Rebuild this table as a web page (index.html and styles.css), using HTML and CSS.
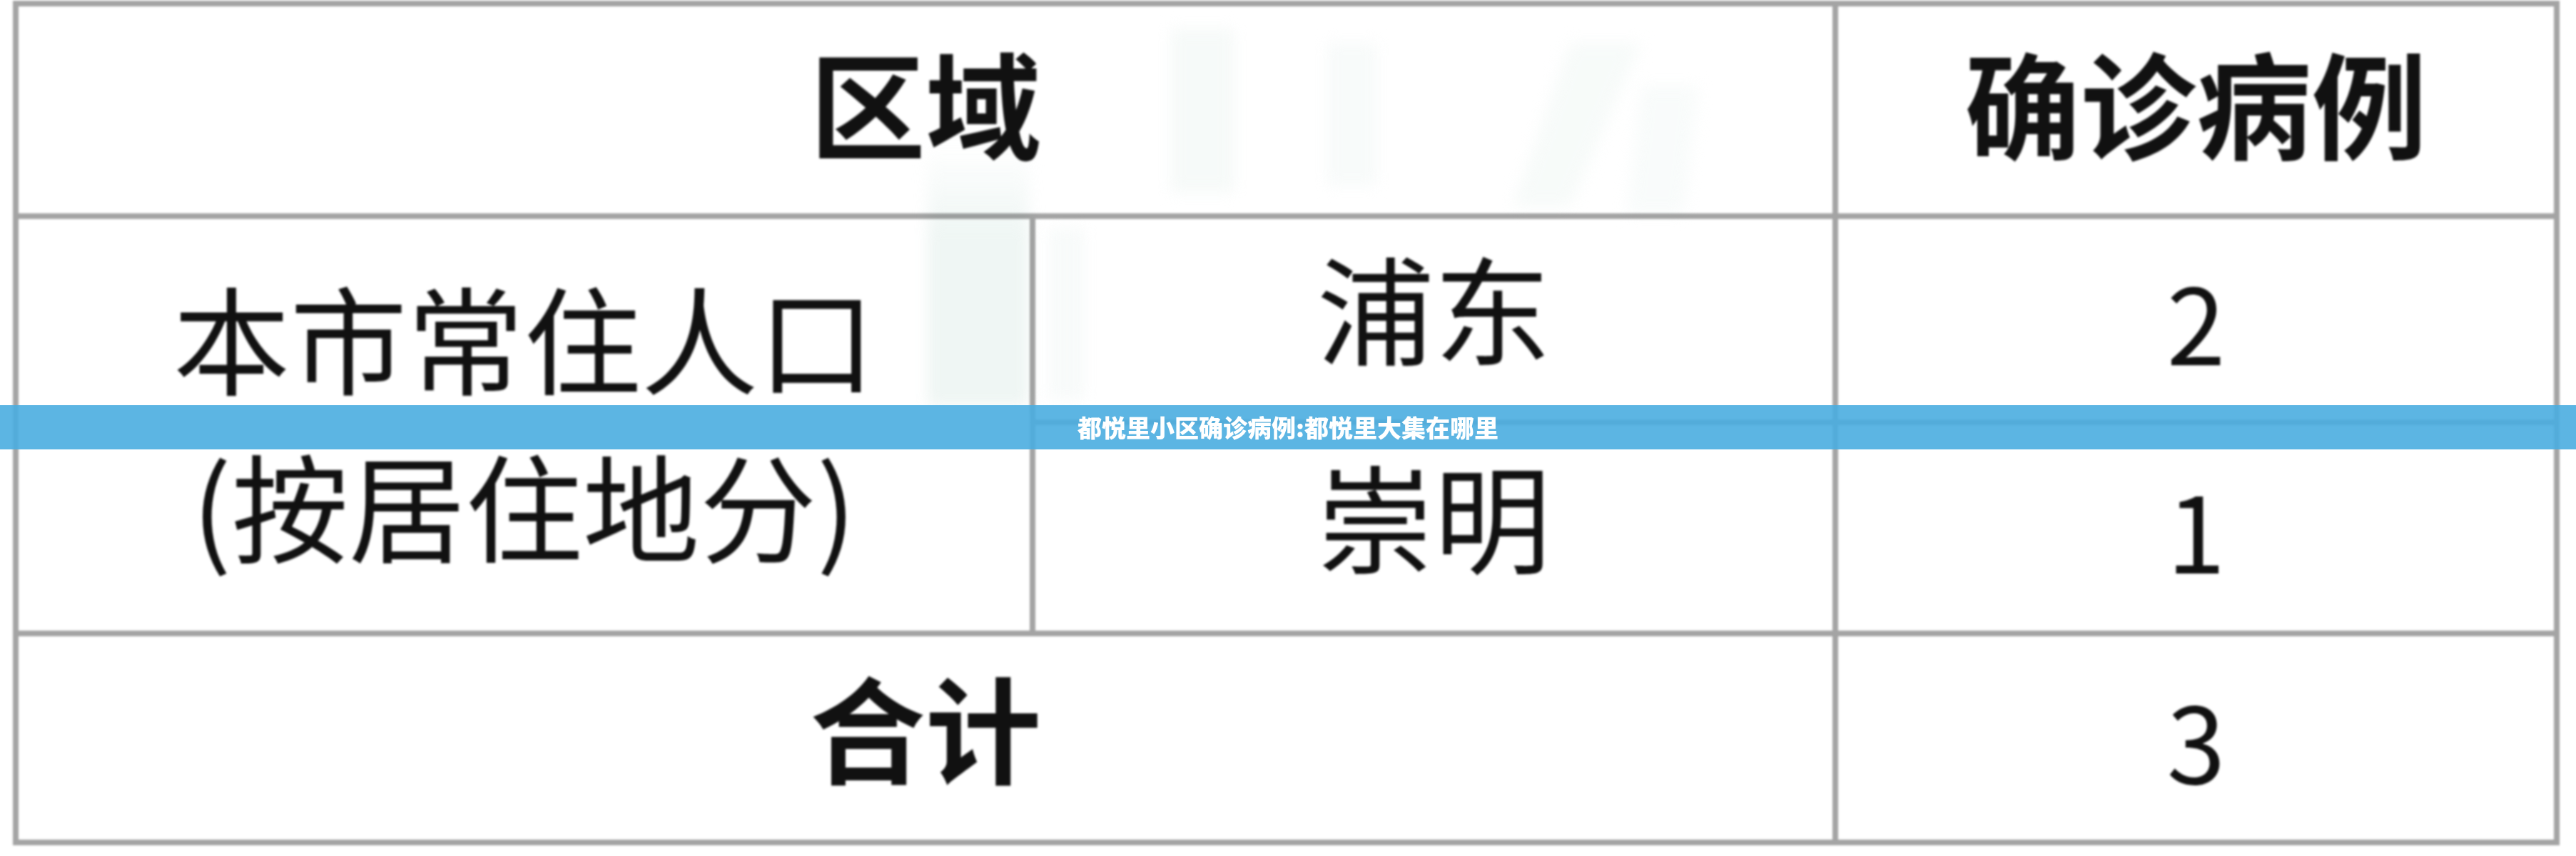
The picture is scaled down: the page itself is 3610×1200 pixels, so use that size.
FILE: index.html
```html
<!DOCTYPE html>
<html lang="zh-CN">
<head>
<meta charset="utf-8">
<title>都悦里小区确诊病例:都悦里大集在哪里</title>
<link rel="stylesheet" href="styles.css">
</head>
<body>
<main class="sheet">
  <div class="grid">
    <div class="cell head span2">区域</div>
    <div class="cell head">确诊病例</div>
    <div class="cell group">本市常住人口<br>(按居住地分)</div>
    <div class="cell area">浦东</div>
    <div class="cell num">2</div>
    <div class="cell area">崇明</div>
    <div class="cell num">1</div>
    <div class="cell head span2 total">合计</div>
    <div class="cell num">3</div>
  </div>
  <svg class="watermark" viewBox="0 0 3610 1200" aria-hidden="true">
    <defs>
      <linearGradient id="wm" x1="0" y1="0" x2="0" y2="1">
        <stop offset="0" stop-color="#e8f2ef" stop-opacity="0"/>
        <stop offset="0.35" stop-color="#e8f2ef" stop-opacity="1"/>
        <stop offset="1" stop-color="#e8f2ef" stop-opacity="1"/>
      </linearGradient>
    </defs>
    <rect x="1300" y="200" width="142" height="370" fill="url(#wm)"/>
    <rect x="1640" y="40" width="90" height="230" fill="#f3f8f6"/>
    <rect x="1860" y="60" width="70" height="200" fill="#f5f9f8"/>
    <path d="M2200 60 L2300 60 L2200 290 L2120 290 Z" fill="#f4f9f7"/>
    <path d="M2300 120 L2380 120 L2360 300 L2280 300 Z" fill="#f6faf9"/>
    <rect x="1470" y="320" width="50" height="240" fill="#f5f9f8"/>
  </svg>
  <div class="banner">都悦里小区确诊病例:都悦里大集在哪里</div>
</main>
</body>
</html>
```
FILE: styles.css
```css
html, body {
  margin: 0;
  padding: 0;
  background: #ffffff;
}

.sheet {
  position: relative;
  width: 3610px;
  height: 1200px;
  overflow: hidden;
  background: #ffffff;
  font-family: "Noto Sans CJK SC", "Noto Sans", sans-serif;
  color: #111111;
}

.grid {
  display: grid;
  grid-template-columns: 1417px 1117px 1003px;
  grid-template-rows: 290px 281px 288px 285px;
  gap: 8px;
  padding: 8px;
  margin: 1px 0 0 18px;
  width: max-content;
  background: #a4a4a4;
  filter: blur(1.4px);
}

.cell {
  background: #ffffff;
  display: flex;
  align-items: center;
  justify-content: center;
  text-align: center;
  font-size: 164px;
  line-height: 1;
  box-sizing: border-box;
}

.head {
  font-weight: 700;
  font-size: 162px;
  padding-bottom: 24px;
}

.span2 {
  grid-column: 1 / 3;
}

.group {
  grid-row: 2 / 4;
  line-height: 235px;
  padding-bottom: 18px;
}

.area {
  padding-bottom: 40px;
}

.total {
  padding-bottom: 36px;
}

.num {
  font-size: 148px;
}

.watermark {
  position: absolute;
  left: 0;
  top: 0;
  width: 3610px;
  height: 1200px;
  pointer-events: none;
  mix-blend-mode: multiply;
  opacity: 0.7;
  filter: blur(10px);
}

.banner {
  position: absolute;
  left: 0;
  right: 0;
  top: 568px;
  height: 62px;
  display: flex;
  align-items: center;
  justify-content: center;
  background: rgba(74, 173, 224, 0.9);
  color: #ffffff;
  font-family: "Noto Sans CJK SC", "Noto Sans", sans-serif;
  font-weight: 900;
  font-size: 34px;
  line-height: 1;
}
```
